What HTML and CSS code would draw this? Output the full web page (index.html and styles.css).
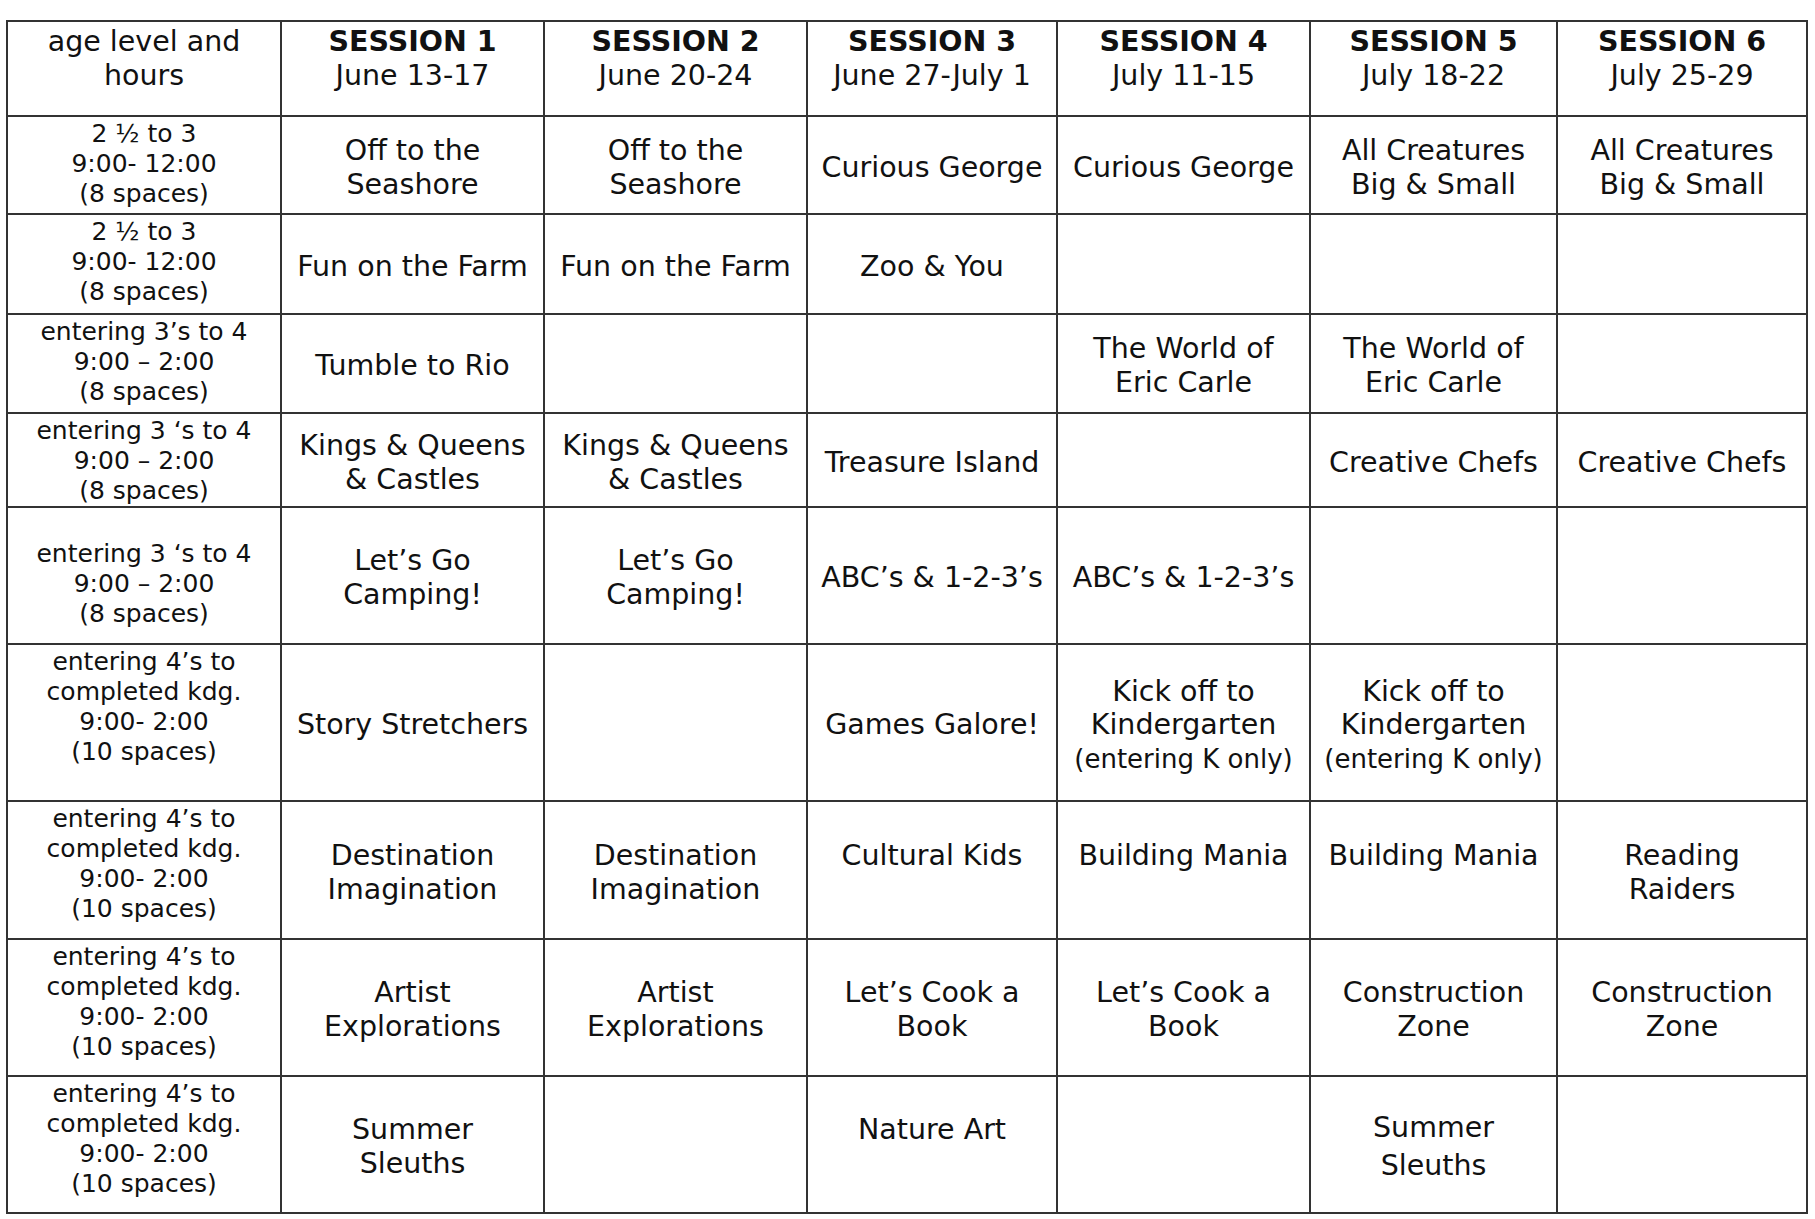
FILE: index.html
```html
<!DOCTYPE html>
<html lang="en">
<head>
<meta charset="utf-8">
<title>Summer Camp Sessions</title>
<link rel="stylesheet" href="styles.css">
</head>
<body>
<div class="sched">
  <div class="cell head"><div class="txt">age level and<br>hours</div></div>
  <div class="cell head"><div class="txt"><b>SESSION 1</b><br>June 13-17</div></div>
  <div class="cell head"><div class="txt"><b>SESSION 2</b><br>June 20-24</div></div>
  <div class="cell head"><div class="txt"><b>SESSION 3</b><br>June 27-July 1</div></div>
  <div class="cell head"><div class="txt"><b>SESSION 4</b><br>July 11-15</div></div>
  <div class="cell head"><div class="txt"><b>SESSION 5</b><br>July 18-22</div></div>
  <div class="cell head"><div class="txt"><b>SESSION 6</b><br>July 25-29</div></div>

  <div class="cell age"><div class="txt">2 ½ to 3<br>9:00- 12:00<br>(8 spaces)</div></div>
  <div class="cell"><div class="txt">Off to the<br>Seashore</div></div>
  <div class="cell"><div class="txt">Off to the<br>Seashore</div></div>
  <div class="cell"><div class="txt">Curious George</div></div>
  <div class="cell"><div class="txt">Curious George</div></div>
  <div class="cell"><div class="txt">All Creatures<br>Big &amp; Small</div></div>
  <div class="cell"><div class="txt">All Creatures<br>Big &amp; Small</div></div>

  <div class="cell age"><div class="txt">2 ½ to 3<br>9:00- 12:00<br>(8 spaces)</div></div>
  <div class="cell"><div class="txt">Fun on the Farm</div></div>
  <div class="cell"><div class="txt">Fun on the Farm</div></div>
  <div class="cell"><div class="txt">Zoo &amp; You</div></div>
  <div class="cell"></div>
  <div class="cell"></div>
  <div class="cell"></div>

  <div class="cell age"><div class="txt">entering 3’s to 4<br>9:00 – 2:00<br>(8 spaces)</div></div>
  <div class="cell"><div class="txt">Tumble to Rio</div></div>
  <div class="cell"></div>
  <div class="cell"></div>
  <div class="cell"><div class="txt">The World of<br>Eric Carle</div></div>
  <div class="cell"><div class="txt">The World of<br>Eric Carle</div></div>
  <div class="cell"></div>

  <div class="cell age"><div class="txt">entering 3 ‘s to 4<br>9:00 – 2:00<br>(8 spaces)</div></div>
  <div class="cell"><div class="txt">Kings &amp; Queens<br>&amp; Castles</div></div>
  <div class="cell"><div class="txt">Kings &amp; Queens<br>&amp; Castles</div></div>
  <div class="cell"><div class="txt">Treasure Island</div></div>
  <div class="cell"></div>
  <div class="cell"><div class="txt">Creative Chefs</div></div>
  <div class="cell"><div class="txt">Creative Chefs</div></div>

  <div class="cell age age-low"><div class="txt">entering 3 ‘s to 4<br>9:00 – 2:00<br>(8 spaces)</div></div>
  <div class="cell"><div class="txt">Let’s Go<br>Camping!</div></div>
  <div class="cell"><div class="txt">Let’s Go<br>Camping!</div></div>
  <div class="cell"><div class="txt">ABC’s &amp; 1-2-3’s</div></div>
  <div class="cell"><div class="txt">ABC’s &amp; 1-2-3’s</div></div>
  <div class="cell"></div>
  <div class="cell"></div>

  <div class="cell age"><div class="txt">entering 4’s to<br>completed kdg.<br>9:00- 2:00<br>(10 spaces)</div></div>
  <div class="cell"><div class="txt">Story Stretchers</div></div>
  <div class="cell"></div>
  <div class="cell"><div class="txt">Games Galore!</div></div>
  <div class="cell"><div class="txt">Kick off to<br>Kindergarten<br><span class="note">(entering K only)</span></div></div>
  <div class="cell"><div class="txt">Kick off to<br>Kindergarten<br><span class="note">(entering K only)</span></div></div>
  <div class="cell"></div>

  <div class="cell age"><div class="txt">entering 4’s to<br>completed kdg.<br>9:00- 2:00<br>(10 spaces)</div></div>
  <div class="cell"><div class="txt">Destination<br>Imagination</div></div>
  <div class="cell"><div class="txt">Destination<br>Imagination</div></div>
  <div class="cell"><div class="txt">Cultural Kids<br>&nbsp;</div></div>
  <div class="cell"><div class="txt">Building Mania<br>&nbsp;</div></div>
  <div class="cell"><div class="txt">Building Mania<br>&nbsp;</div></div>
  <div class="cell"><div class="txt">Reading<br>Raiders</div></div>

  <div class="cell age"><div class="txt">entering 4’s to<br>completed kdg.<br>9:00- 2:00<br>(10 spaces)</div></div>
  <div class="cell"><div class="txt">Artist<br>Explorations</div></div>
  <div class="cell"><div class="txt">Artist<br>Explorations</div></div>
  <div class="cell"><div class="txt">Let’s Cook a<br>Book</div></div>
  <div class="cell"><div class="txt">Let’s Cook a<br>Book</div></div>
  <div class="cell"><div class="txt">Construction<br>Zone</div></div>
  <div class="cell"><div class="txt">Construction<br>Zone</div></div>

  <div class="cell age"><div class="txt">entering 4’s to<br>completed kdg.<br>9:00- 2:00<br>(10 spaces)</div></div>
  <div class="cell"><div class="txt">Summer<br>Sleuths</div></div>
  <div class="cell"></div>
  <div class="cell"><div class="txt">Nature Art<br>&nbsp;</div></div>
  <div class="cell"></div>
  <div class="cell"><div class="txt wide">Summer<br>Sleuths</div></div>
  <div class="cell"></div>
</div>
</body>
</html>
```

FILE: styles.css
```css
html, body {
  margin: 0;
  padding: 0;
  background: #ffffff;
}

body {
  font-family: "DejaVu Sans", Verdana, sans-serif;
  color: #111111;
}

.sched {
  display: grid;
  grid-template-columns: 272px 261px 261px 248px 251px 245px 248px;
  grid-template-rows: 93px 96px 98px 97px 92px 135px 155px 136px 135px 135px;
  gap: 2px;
  padding: 2px;
  background: #333333;
  width: max-content;
  margin: 20px 0 0 6px;
}

.cell {
  background: #ffffff;
  display: flex;
  align-items: center;
  justify-content: center;
  text-align: center;
  font-size: 28.5px;
  line-height: 33.6px;
  padding-top: 5px;
  overflow: hidden;
}

.txt {
  white-space: nowrap;
}

.head {
  align-items: flex-start;
  padding-top: 3px;
}

.head b {
  font-weight: bold;
}

.age {
  align-items: flex-start;
  font-size: 25px;
  line-height: 30px;
  padding-top: 2px;
}

.age-low {
  padding-top: 31px;
}

.note {
  font-size: 26px;
  line-height: 32px;
}

.wide {
  line-height: 38px;
}
```
